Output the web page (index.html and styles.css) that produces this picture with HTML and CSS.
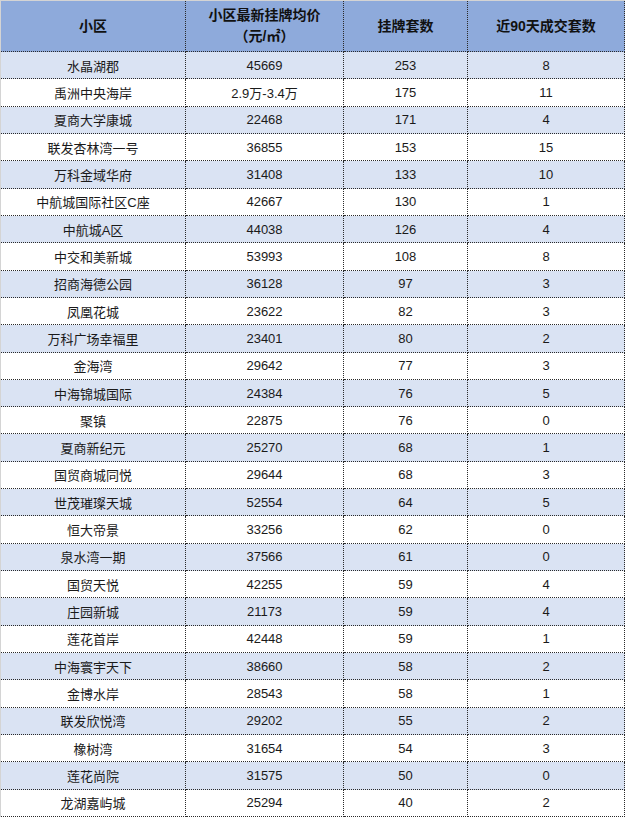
FILE: index.html
```html
<!DOCTYPE html>
<html lang="zh-CN">
<head>
<meta charset="utf-8">
<title>小区挂牌数据</title>
<link rel="stylesheet" href="styles.css">
</head>
<body>
<div class="sheet">
  <div class="cell head">小区</div>
  <div class="cell head">小区最新挂牌均价<br>（元/㎡）</div>
  <div class="cell head">挂牌套数</div>
  <div class="cell head">近90天成交套数</div>

  <div class="cell alt">水晶湖郡</div><div class="cell alt">45669</div><div class="cell alt">253</div><div class="cell alt">8</div>
  <div class="cell">禹洲中央海岸</div><div class="cell">2.9万-3.4万</div><div class="cell">175</div><div class="cell">11</div>
  <div class="cell alt">夏商大学康城</div><div class="cell alt">22468</div><div class="cell alt">171</div><div class="cell alt">4</div>
  <div class="cell">联发杏林湾一号</div><div class="cell">36855</div><div class="cell">153</div><div class="cell">15</div>
  <div class="cell alt">万科金域华府</div><div class="cell alt">31408</div><div class="cell alt">133</div><div class="cell alt">10</div>
  <div class="cell">中航城国际社区C座</div><div class="cell">42667</div><div class="cell">130</div><div class="cell">1</div>
  <div class="cell alt">中航城A区</div><div class="cell alt">44038</div><div class="cell alt">126</div><div class="cell alt">4</div>
  <div class="cell">中交和美新城</div><div class="cell">53993</div><div class="cell">108</div><div class="cell">8</div>
  <div class="cell alt">招商海德公园</div><div class="cell alt">36128</div><div class="cell alt">97</div><div class="cell alt">3</div>
  <div class="cell">凤凰花城</div><div class="cell">23622</div><div class="cell">82</div><div class="cell">3</div>
  <div class="cell alt">万科广场幸福里</div><div class="cell alt">23401</div><div class="cell alt">80</div><div class="cell alt">2</div>
  <div class="cell">金海湾</div><div class="cell">29642</div><div class="cell">77</div><div class="cell">3</div>
  <div class="cell alt">中海锦城国际</div><div class="cell alt">24384</div><div class="cell alt">76</div><div class="cell alt">5</div>
  <div class="cell">聚镇</div><div class="cell">22875</div><div class="cell">76</div><div class="cell">0</div>
  <div class="cell alt">夏商新纪元</div><div class="cell alt">25270</div><div class="cell alt">68</div><div class="cell alt">1</div>
  <div class="cell">国贸商城同悦</div><div class="cell">29644</div><div class="cell">68</div><div class="cell">3</div>
  <div class="cell alt">世茂璀璨天城</div><div class="cell alt">52554</div><div class="cell alt">64</div><div class="cell alt">5</div>
  <div class="cell">恒大帝景</div><div class="cell">33256</div><div class="cell">62</div><div class="cell">0</div>
  <div class="cell alt">泉水湾一期</div><div class="cell alt">37566</div><div class="cell alt">61</div><div class="cell alt">0</div>
  <div class="cell">国贸天悦</div><div class="cell">42255</div><div class="cell">59</div><div class="cell">4</div>
  <div class="cell alt">庄园新城</div><div class="cell alt">21173</div><div class="cell alt">59</div><div class="cell alt">4</div>
  <div class="cell">莲花首岸</div><div class="cell">42448</div><div class="cell">59</div><div class="cell">1</div>
  <div class="cell alt">中海寰宇天下</div><div class="cell alt">38660</div><div class="cell alt">58</div><div class="cell alt">2</div>
  <div class="cell">金博水岸</div><div class="cell">28543</div><div class="cell">58</div><div class="cell">1</div>
  <div class="cell alt">联发欣悦湾</div><div class="cell alt">29202</div><div class="cell alt">55</div><div class="cell alt">2</div>
  <div class="cell">橡树湾</div><div class="cell">31654</div><div class="cell">54</div><div class="cell">3</div>
  <div class="cell alt">莲花尚院</div><div class="cell alt">31575</div><div class="cell alt">50</div><div class="cell alt">0</div>
  <div class="cell">龙湖嘉屿城</div><div class="cell">25294</div><div class="cell">40</div><div class="cell">2</div>
</div>
</body>
</html>
```

FILE: styles.css
```css
html, body {
  margin: 0;
  padding: 0;
  background: #ffffff;
}

.sheet {
  width: 625px;
  height: 817px;
  box-sizing: border-box;
  border-left: 1px solid #d4d4d4;
  border-top: 1px solid #d4d4d4;
  display: grid;
  grid-template-columns: 185px 158px 124px 157px;
  grid-template-rows: 51px repeat(28, 1fr);
  font-family: "Liberation Sans", "Noto Sans CJK SC", sans-serif;
  font-size: 13px;
  color: #1a1a1a;
}

.cell {
  box-sizing: border-box;
  border-right: 1px dotted #2a2a2a;
  border-bottom: 1px dotted #2a2a2a;
  display: flex;
  align-items: center;
  justify-content: center;
  text-align: center;
  background: #ffffff;
}

.cell.alt {
  background: #dae3f3;
}

.cell.head {
  background: #8eaadb;
  font-weight: bold;
  font-size: 14px;
  line-height: 21px;
  color: #111111;
}
```
